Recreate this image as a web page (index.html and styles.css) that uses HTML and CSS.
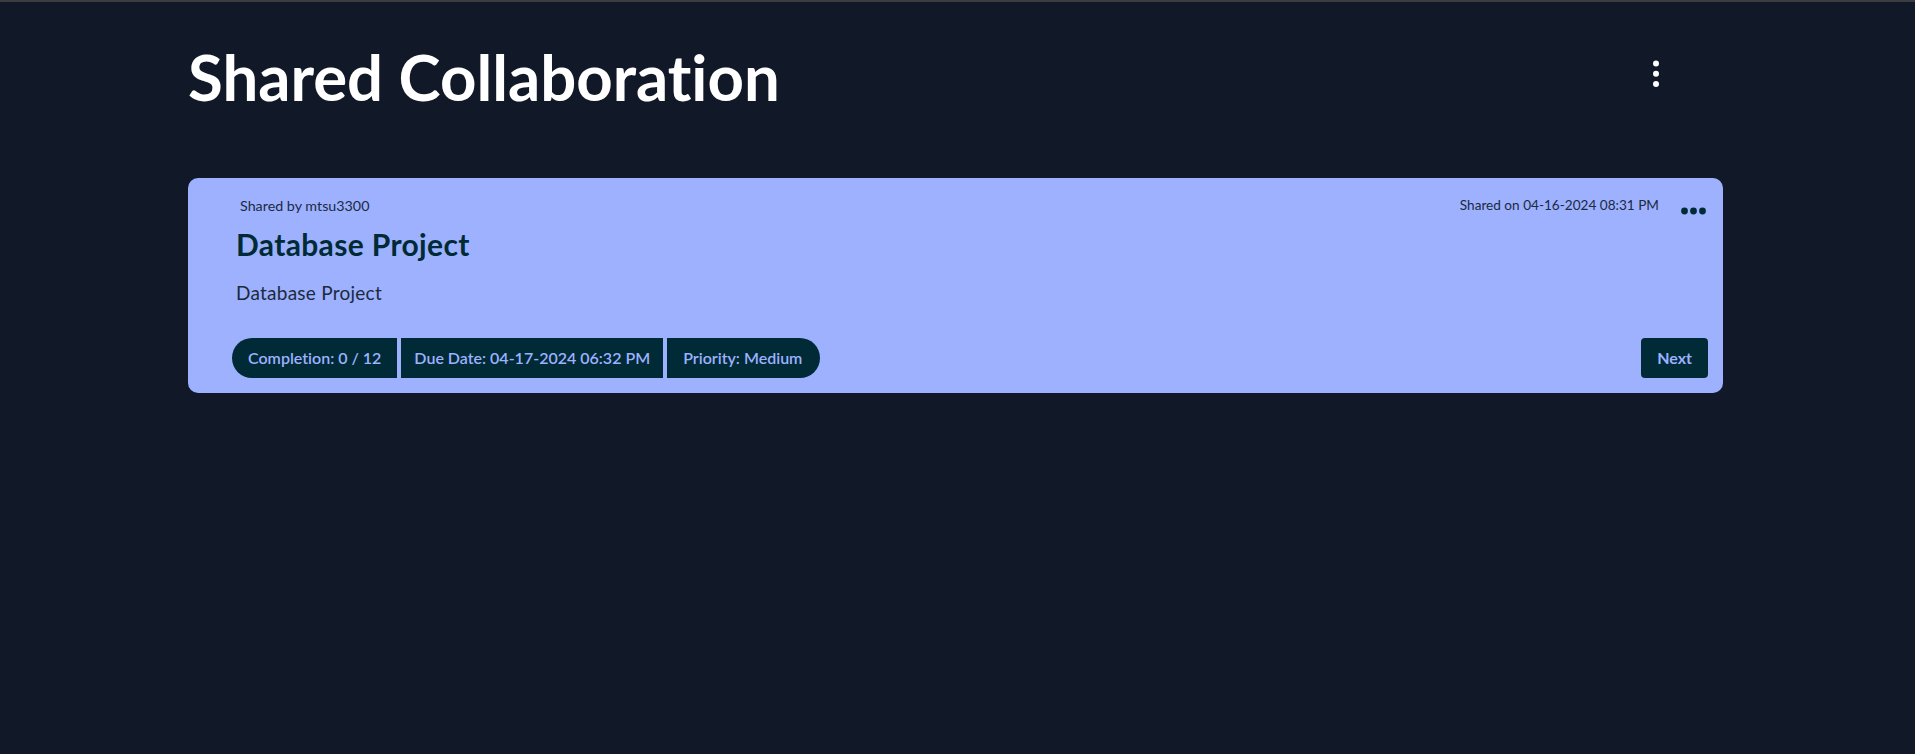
FILE: index.html
```html
<!DOCTYPE html>
<html>
<head>
<meta charset="utf-8">
<title>Shared Collaboration</title>
<link rel="stylesheet" href="styles.css">
</head>
<body>
<main class="page">
  <header class="page-header">
    <h1 class="page-title">Shared Collaboration</h1>
    <button class="kebab" aria-label="Menu">
      <svg width="8" height="28" viewBox="0 0 8 28"><circle cx="4" cy="3.5" r="3" fill="#fff"/><circle cx="4" cy="13.8" r="3" fill="#fff"/><circle cx="4" cy="24.1" r="3" fill="#fff"/></svg>
    </button>
  </header>

  <section class="card">
    <div class="card-head">
      <span class="shared-by">Shared by mtsu3300</span>
      <div class="card-meta">
        <span class="shared-on">Shared on 04-16-2024 08:31 PM</span>
        <button class="more" aria-label="More options">
          <svg width="25" height="8" viewBox="0 0 25 8"><circle cx="3.5" cy="4" r="3.4"/><circle cx="12.5" cy="4" r="3.4"/><circle cx="21.5" cy="4" r="3.4"/></svg>
        </button>
      </div>
    </div>
    <h2 class="card-title">Database Project</h2>
    <p class="card-desc">Database Project</p>
    <div class="card-foot">
      <div class="pills">
        <span class="pill pill-first">Completion: 0 / 12</span>
        <span class="pill pill-mid">Due Date: 04-17-2024 06:32 PM</span>
        <span class="pill pill-last">Priority: Medium</span>
      </div>
      <button class="next">Next</button>
    </div>
  </section>
</main>
</body>
</html>
```
FILE: styles.css
```css
* { box-sizing: border-box; }

body {
  margin: 0;
  min-height: 754px;
  background: #111827;
  border-top: 2px solid #3c3d40;
  font-family: Lato, "Open Sans", sans-serif;
  font-variant-ligatures: none;
}

.page {
  width: 1535px;
  margin-left: 188px;
}

.page-header {
  display: flex;
  justify-content: space-between;
  align-items: flex-start;
  padding-top: 43px;
  padding-right: 63px;
}

.page-title {
  margin: 0;
  color: #ffffff;
  font-size: 63.5px;
  font-weight: 700;
  line-height: 1;
}

.kebab {
  margin-top: 15px;
  padding: 0;
  border: 0;
  background: none;
  display: flex;
}

.card {
  margin-top: 69px;
  background: #9db1ff;
  border-radius: 10px;
  padding: 18px 15px 15px 44px;
  display: flex;
  flex-direction: column;
}

.card-head {
  display: flex;
  justify-content: space-between;
  align-items: flex-start;
  height: 18px;
}

.shared-by {
  margin-left: 8px;
  margin-top: 1px;
  font-size: 14.3px;
  line-height: 18px;
  color: #1b2a3f;
}

.card-meta {
  display: flex;
  align-items: flex-start;
  gap: 22px;
}

.shared-on {
  font-size: 13.6px;
  line-height: 18px;
  color: #1b2a3f;
}

.more {
  margin-top: 11px;
  margin-right: 2px;
  padding: 0;
  border: 0;
  background: none;
  display: flex;
}

.more svg { fill: #002b36; }

.card-title {
  margin: 14px 0 0 4px;
  font-size: 30px;
  font-weight: 700;
  letter-spacing: 0.35px;
  line-height: 32px;
  color: #002b36;
}

.card-desc {
  margin: 21px 0 0 4px;
  font-size: 19px;
  letter-spacing: 0.25px;
  line-height: 24px;
  color: #1c2a3c;
}

.card-foot {
  margin-top: 33px;
  display: flex;
  justify-content: space-between;
  align-items: center;
}

.pills {
  display: flex;
  gap: 4px;
}

.pill {
  height: 40px;
  display: flex;
  align-items: center;
  padding: 0 16px;
  background: #002b36;
  color: #9db1ff;
  font-size: 16px;
  font-weight: 600;
}

.pill-mid { padding: 0 13px; }
.pill-first { border-radius: 20px 0 0 20px; }
.pill-last { border-radius: 0 20px 20px 0; padding-right: 18px; }

.next {
  height: 40px;
  padding: 0 16px;
  border: 0;
  border-radius: 4px;
  background: #002b36;
  color: #9db1ff;
  font-family: Lato, "Open Sans", sans-serif;
  font-size: 16px;
  font-weight: 700;
}
```
